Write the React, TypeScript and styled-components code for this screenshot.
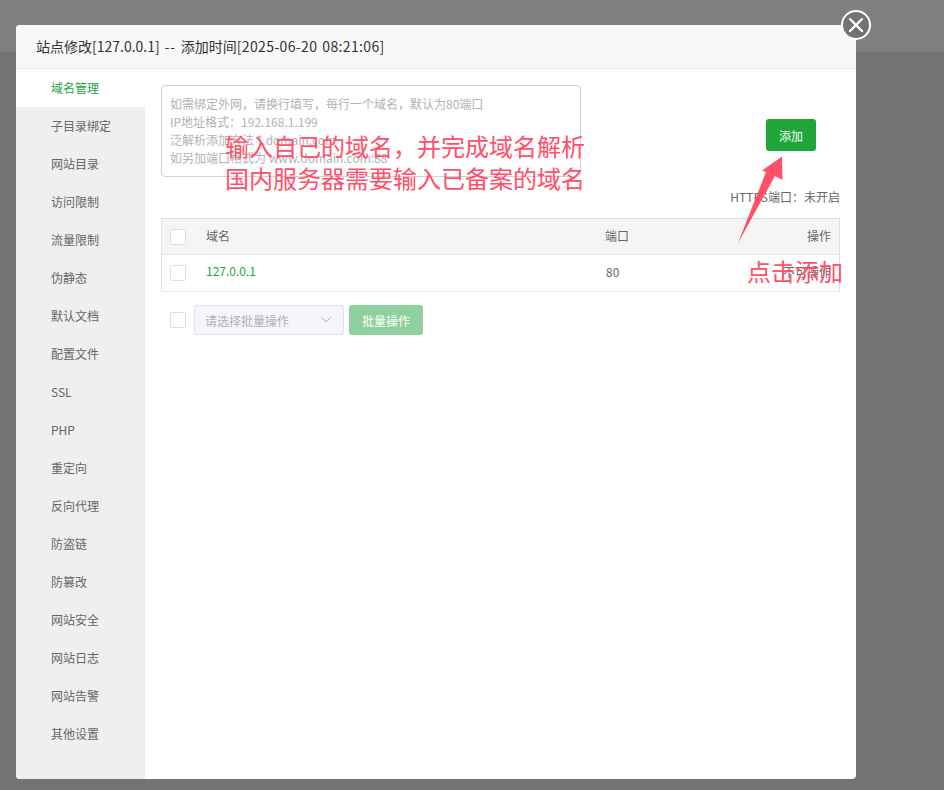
import styled, { createGlobalStyle } from 'styled-components';

const GlobalStyle = createGlobalStyle`
  html, body {
    margin: 0;
    padding: 0;
    height: 100%;
    overflow: hidden;
    background: #737373;
    font-family: "Noto Sans CJK SC", "Liberation Sans", sans-serif;
  }
  * { box-sizing: border-box; }
`;

const Page = styled.div`
  width: 944px;
  height: 790px;
  background: #737373;
`;

const TopStrip = styled.div`
  height: 52px;
  background: #808080;
`;

const Modal = styled.div`
  position: fixed;
  left: 16px;
  top: 25px;
  width: 840px;
  height: 754px;
  background: #fff;
  border-radius: 4px;
  display: flex;
  flex-direction: column;
`;

const ModalTitle = styled.div`
  height: 44px;
  flex: none;
  background: #f8f8f8;
  border-bottom: 1px solid #e9ebee;
  border-radius: 4px 4px 0 0;
  padding-left: 20px;
  font-size: 14px;
  line-height: 42px;
  color: #333;
  word-spacing: 1.5px;
`;

const TitleDash = styled.span`
  letter-spacing: 1px;
`;

const TitleDate = styled.span`
  letter-spacing: 0.36px;
`;

const CloseButton = styled.div`
  position: absolute;
  right: -15px;
  top: -15px;
  width: 30px;
  height: 30px;
  border-radius: 50%;
  border: 2px solid #fff;
  background: #737373;
  display: flex;
  align-items: center;
  justify-content: center;
`;

const ModalBody = styled.div`
  flex: 1;
  display: flex;
  min-height: 0;
`;

const Sidebar = styled.div`
  width: 129px;
  flex: none;
  background: #efefef;
  border-radius: 0 0 0 4px;
`;

const SideItem = styled.div<{ $active?: boolean }>`
  height: 38px;
  padding-left: 35px;
  font-size: 12px;
  line-height: 38px;
  color: ${(p) => (p.$active ? '#20a53a' : '#666')};
  background: ${(p) => (p.$active ? '#fff' : 'transparent')};
`;

const Content = styled.div`
  flex: 1;
  padding: 16px 16px 0;
`;

const TopRow = styled.div`
  display: flex;
  justify-content: space-between;
  align-items: flex-start;
`;

const DomainInput = styled.div`
  width: 420px;
  height: 92px;
  border: 1px solid #ced0da;
  border-radius: 4px;
  padding: 9px 8px;
  font-size: 12px;
  line-height: 18px;
  color: #b0b2b8;
`;

const AddButton = styled.div`
  width: 50px;
  height: 32px;
  margin: 34px 24px 0 0;
  background: #20a53a;
  border-radius: 3px;
  color: #fff;
  font-size: 12px;
  line-height: 33px;
  text-align: center;
`;

const HttpsLine = styled.div`
  margin-top: 12px;
  height: 17px;
  font-size: 12px;
  line-height: 15px;
  color: #666;
  text-align: right;
`;

const Table = styled.div`
  margin-top: 12px;
  border: 1px solid #ddd;
  border-bottom-color: #e9ebee;
  border-left-color: #e4e4e4;
`;

const Row = styled.div<{ $head?: boolean }>`
  display: grid;
  grid-template-columns: 44px 399px 1fr auto;
  align-items: center;
  height: 36px;
  padding-right: 8px;
  font-size: 12px;
  line-height: 16px;
  color: #666;
  background: ${(p) => (p.$head ? '#f5f5f5' : '#fff')};
  border-bottom: ${(p) => (p.$head ? '1px solid #e9ebee' : 'none')};
`;

const Cell = styled.span`
  position: relative;
  top: -1px;
`;

const PortCell = styled(Cell)`
  left: 1px;
`;

const CheckCell = styled.div`
  padding-left: 8px;
  display: flex;
  align-items: center;
`;

const Check = styled.div`
  width: 16px;
  height: 16px;
  background: #fff;
  border: 1px solid #dcdfe6;
  border-radius: 2px;
`;

const DomainLink = styled.span`
  color: #20a53a;
  position: relative;
  top: -2px;
`;

const BatchRow = styled.div`
  display: flex;
  align-items: center;
  margin-top: 13px;
  padding-left: 9px;
`;

const BatchSelect = styled.div`
  width: 150px;
  height: 30px;
  margin-left: 8px;
  padding: 0 12px 0 10px;
  background: #f4f6fa;
  border: 1px solid #e1e4ec;
  border-radius: 3px;
  display: flex;
  align-items: center;
  justify-content: space-between;
  font-size: 12px;
  color: #b0b2b8;
`;

const BatchButton = styled.div`
  width: 74px;
  height: 30px;
  margin-left: 5px;
  background: #8fd19e;
  border-radius: 3px;
  color: #fff;
  font-size: 12px;
  line-height: 31px;
  text-align: center;
`;

const Note = styled.div`
  position: fixed;
  font-size: 24px;
  line-height: 32px;
  color: #ff5068;
  white-space: nowrap;
`;

const NoteMain = styled(Note)`
  left: 225px;
  top: 130px;
`;

const NoteClick = styled(Note)`
  left: 747px;
  top: 255px;
`;

const ArrowSvg = styled.svg`
  position: fixed;
  left: 730px;
  top: 150px;
`;

const menu = [
  '域名管理',
  '子目录绑定',
  '网站目录',
  '访问限制',
  '流量限制',
  '伪静态',
  '默认文档',
  '配置文件',
  'SSL',
  'PHP',
  '重定向',
  '反向代理',
  '防盗链',
  '防篡改',
  '网站安全',
  '网站日志',
  '网站告警',
  '其他设置',
];

const App = () => {
  return (
    <Page>
      <GlobalStyle />
      <TopStrip />
      <Modal>
        <ModalTitle>
          站点修改[127.0.0.1] <TitleDash>--</TitleDash> 添加时间
          <TitleDate>[2025-06-20 08:21:06]</TitleDate>
        </ModalTitle>
        <CloseButton>
          <svg width="16" height="16" viewBox="0 0 16 16">
            <path d="M2 2 L14 14 M14 2 L2 14" stroke="#fff" strokeWidth="2.4" strokeLinecap="round" />
          </svg>
        </CloseButton>
        <ModalBody>
          <Sidebar>
            {menu.map((item, index) => (
              <SideItem key={item} $active={index === 0}>
                {item}
              </SideItem>
            ))}
          </Sidebar>
          <Content>
            <TopRow>
              <DomainInput>
                如需绑定外网，请换行填写，每行一个域名，默认为80端口
                <br />
                IP地址格式：192.168.1.199
                <br />
                泛解析添加方法 *.domain.com
                <br />
                如另加端口格式为 www.domain.com:88
              </DomainInput>
              <AddButton>添加</AddButton>
            </TopRow>
            <HttpsLine>HTTPS端口：未开启</HttpsLine>
            <Table>
              <Row $head>
                <CheckCell>
                  <Check />
                </CheckCell>
                <Cell>域名</Cell>
                <Cell>端口</Cell>
                <Cell>操作</Cell>
              </Row>
              <Row>
                <CheckCell>
                  <Check />
                </CheckCell>
                <DomainLink>127.0.0.1</DomainLink>
                <PortCell>80</PortCell>
                <Cell>不可操作</Cell>
              </Row>
            </Table>
            <BatchRow>
              <Check />
              <BatchSelect>
                请选择批量操作
                <svg width="10" height="6" viewBox="0 0 10 6">
                  <path d="M0.5 0.5 L5 5 L9.5 0.5" fill="none" stroke="#b0b2b8" strokeWidth="1" />
                </svg>
              </BatchSelect>
              <BatchButton>批量操作</BatchButton>
            </BatchRow>
          </Content>
        </ModalBody>
      </Modal>
      <NoteMain>
        输入自己的域名，并完成域名解析
        <br />
        国内服务器需要输入已备案的域名
      </NoteMain>
      <NoteClick>点击添加</NoteClick>
      <ArrowSvg width="60" height="100" viewBox="0 0 60 100">
        <path d="M8 93 L36 22 L32 20.5 L52 6.5 L52.5 30 L45 26 Z" fill="#ff5068" />
      </ArrowSvg>
    </Page>
  );
};

export default App;
